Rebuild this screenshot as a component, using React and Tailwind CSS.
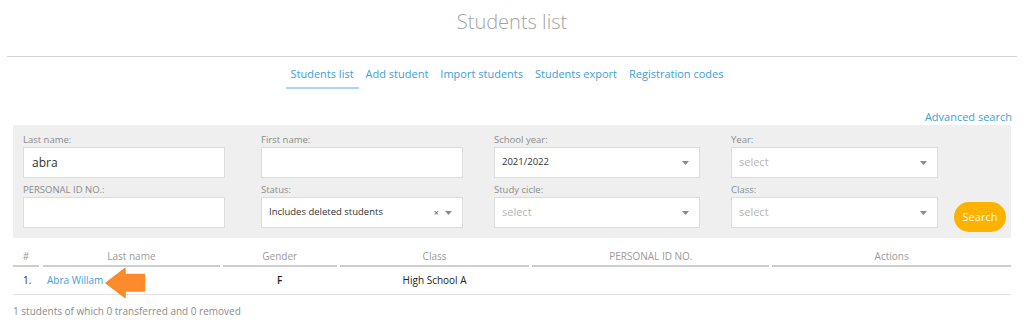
import React from 'react';

const font = { fontFamily: '"Open Sans", "Liberation Sans", sans-serif' };

const Caret = () => (
    <svg width="7" height="4" viewBox="0 0 7 4" className="shrink-0">
        <path d="M0 0 L7 0 L3.5 4 Z" fill="#8a8a8a" />
    </svg>
);

const Field = ({ label, width, children, className = '' }) => (
    <div className={`flex flex-col ${className}`} style={{ width }}>
        <label className="text-[9.5px] leading-[14px] text-[#8c8c8c] h-[14px]">{label}</label>
        <div className="h-[31px] bg-white border border-[#dcdcdc] flex items-center px-[7px]">{children}</div>
    </div>
);

const SelectBox = ({ value, placeholder, clearable }) => (
    <div className="flex items-center w-full">
        {value ? (
            <span className="text-[9.5px] text-[#333] flex-1">{value}</span>
        ) : (
            <span className="text-[11px] text-[#b5b5b5] flex-1">{placeholder}</span>
        )}
        {clearable && <span className="text-[9px] text-[#555] mr-[6px]">×</span>}
        <span className="mr-[3px]"><Caret /></span>
    </div>
);

const tabs = ['Students list', 'Add student', 'Import students', 'Students export', 'Registration codes'];

const cols = [
    { name: '#', w: 26, ml: 0 },
    { name: 'Last name', w: 177, ml: 4 },
    { name: 'Gender', w: 114, ml: 3 },
    { name: 'Class', w: 190, ml: 3 },
    { name: 'PERSONAL ID NO.', w: 237, ml: 3 },
    { name: 'Actions', w: 239, ml: 3 },
];

export default function App() {
    return (
        <div className="w-[1024px] h-[328px] bg-white overflow-hidden" style={font}>
            <h1 className="text-center text-[20px] font-light text-[#a3a3a3] leading-[30px] pt-[7px] h-[56px]">Students list</h1>
            <div className="mx-[7px] border-t border-[#d4d4d4]"></div>

            <nav className="flex justify-center gap-[2px] mt-[7px] ml-[-10px]">
                {tabs.map((t, i) => (
                    <a
                        key={t}
                        className={`px-[5px] text-[11px] leading-[20px] pb-[3px] text-[#3d9fd6] border-b-[2px] ${i === 0 ? 'border-[#a9d9f2]' : 'border-transparent'}`}
                    >
                        {t}
                    </a>
                ))}
            </nav>

            <div className="mx-[13px] mt-[20px]">
                <div className="flex justify-end">
                    <a className="text-[11px] leading-[16px] text-[#3d9fd6] mr-[-1px]">Advanced search</a>
                </div>

                <div className="bg-[#efefef] pl-[10px] pt-[8px] pb-[10px] flex">
                    <div className="flex flex-col gap-[5px]">
                        <div className="flex">
                            <Field label="Last name:" width={202}>
                                <span className="text-[12px] text-[#333] pl-[1px]">abra</span>
                            </Field>
                            <Field label="First name:" width={202} className="ml-[36px]" />
                            <Field label="School year:" width={206} className="ml-[31px]">
                                <SelectBox value="2021/2022" />
                            </Field>
                            <Field label="Year:" width={207} className="ml-[31px]">
                                <SelectBox placeholder="select" />
                            </Field>
                        </div>
                        <div className="flex">
                            <Field label="PERSONAL ID NO.:" width={202} />
                            <Field label="Status:" width={202} className="ml-[36px]">
                                <SelectBox value="Includes deleted students" clearable />
                            </Field>
                            <Field label="Study cicle:" width={206} className="ml-[31px]">
                                <SelectBox placeholder="select" />
                            </Field>
                            <Field label="Class:" width={207} className="ml-[31px]">
                                <SelectBox placeholder="select" />
                            </Field>
                        </div>
                    </div>
                    <div className="flex items-end ml-[16px]">
                        <button className="w-[52px] h-[30px] mb-[-4px] rounded-full bg-[#fdb100] text-white text-[11px]">Search</button>
                    </div>
                </div>

                <div className="mt-[10px]">
                    <div className="flex">
                        {cols.map((c) => (
                            <div
                                key={c.name}
                                className="text-center text-[10px] leading-[16px] text-[#9a9a9a] border-b-[2px] border-[#cfcfcf] pb-[1px]"
                                style={{ width: c.w, marginLeft: c.ml }}
                            >
                                {c.name}
                            </div>
                        ))}
                    </div>
                    <div className="relative flex items-center h-[28px] border-b border-[#e2e2e2] text-[10px] text-[#333]">
                        <div className="w-[26px] pl-[10px]">1.</div>
                        <div className="w-[177px] ml-[4px] pl-[4px] text-[#3d9fd6]">Abra Willam</div>
                        <div className="w-[114px] ml-[3px] text-center font-semibold text-[#222]">F</div>
                        <div className="w-[190px] ml-[3px] text-center text-[#222]">High School A</div>
                        <div className="w-[237px] ml-[3px]"></div>
                        <div className="w-[239px] ml-[3px]"></div>
                        <svg className="absolute left-[92px] top-[0px]" width="41" height="32" viewBox="0 0 41 32">
                            <path d="M1 16 L20 1.5 L20 7.5 L39.5 7.5 L39.5 24 L20 24 L20 30.5 Z" fill="#fd8a2b" stroke="#fd8a2b" strokeLinejoin="round" strokeWidth="1.5" />
                        </svg>
                    </div>
                    <p className="text-[10px] leading-[14px] text-[#8c8c8c] mt-[9px]">1 students of which 0 transferred and 0 removed</p>
                </div>
            </div>
        </div>
    );
}
